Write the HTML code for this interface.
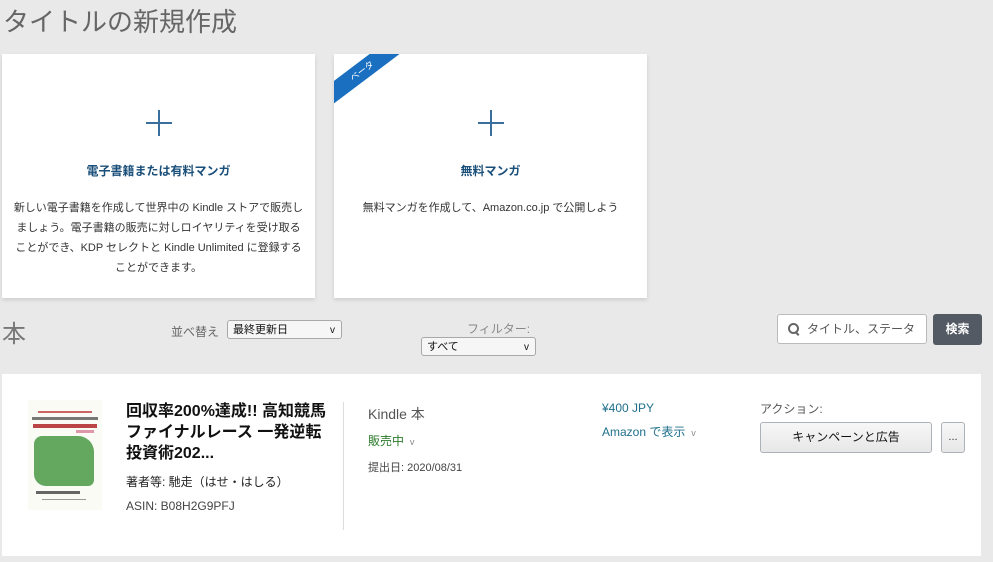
<!DOCTYPE html><html><head><meta charset="utf-8"><style>
body{margin:0;width:993px;height:562px;background:#e9e9e9;font-family:"Liberation Sans","Noto Sans CJK JP",sans-serif;position:relative;overflow:hidden;color:#333}
.a{position:absolute}
.card{position:absolute;top:54px;width:313px;height:244px;background:#fff;box-shadow:0 2px 4px rgba(0,0,0,.12)}
.plus{position:absolute;top:56px;width:26px;height:26px}
.plus:before{content:"";position:absolute;left:12px;top:0;width:2px;height:26px;background:#3a6e9c}
.plus:after{content:"";position:absolute;top:12px;left:0;height:2px;width:26px;background:#3a6e9c}
.ct{position:absolute;top:108px;width:100%;text-align:center;color:#1a4f7a;font-weight:bold;font-size:12px}
.cd{position:absolute;top:144px;left:10px;right:10px;text-align:center;font-size:11px;line-height:20px;color:#333}
.sel{position:absolute;height:19px;background:#f6f6f6;border:1px solid #a8a8a8;border-radius:3px;font-size:11px;line-height:19px;padding-left:5px;box-sizing:border-box;color:#111}
.sel span{position:absolute;right:6px;top:0;font-size:10px}
</style></head><body>
<div class="a" style="left:3px;top:2px;font-size:26px;color:#666">タイトルの新規作成</div>
<div class="card" style="left:2px"><div class="plus" style="left:144px"></div><div class="ct">電子書籍または有料マンガ</div><div class="cd">新しい電子書籍を作成して世界中の Kindle ストアで販売しましょう。電子書籍の販売に対しロイヤリティを受け取ることができ、KDP セレクトと Kindle Unlimited に登録することができます。</div></div>
<div class="card" style="left:334px;overflow:hidden"><div class="a" style="left:-22px;top:8px;width:100px;height:18px;background:#1a6fc0;transform:rotate(-37deg);color:#fff;font-size:9px;text-align:center;line-height:18px">ベータ</div><div class="plus" style="left:144px"></div><div class="ct">無料マンガ</div><div class="cd" style="top:144px">無料マンガを作成して、Amazon.co.jp で公開しよう</div></div>
<div class="a" style="left:2px;top:314px;font-size:24px;color:#777">本</div>
<div class="a" style="left:171px;top:323px;font-size:12px;color:#666">並べ替え</div>
<div class="sel" style="left:227px;top:320px;width:115px">最終更新日<span>v</span></div>
<div class="a" style="left:467px;top:320px;font-size:12px;color:#888">フィルター:</div>
<div class="sel" style="left:421px;top:337px;width:115px">すべて<span>v</span></div>
<div class="a" style="left:777px;top:314px;width:150px;height:30px;background:#fff;border:1px solid #bbb;border-radius:3px;box-sizing:border-box;font-size:12px;line-height:28px;padding-left:29px;color:#555;white-space:nowrap;overflow:hidden"><span style="display:inline-block;width:108px;overflow:hidden;vertical-align:top">タイトル、ステータス</span></div>
<div class="a" style="left:788px;top:323px;width:7px;height:7px;border:2px solid #666;border-radius:50%"></div>
<div class="a" style="left:796px;top:331px;width:2px;height:5px;background:#666;transform:rotate(-45deg)"></div>
<div class="a" style="left:933px;top:314px;width:49px;height:31px;background:#535a63;border-radius:3px;color:#fff;font-size:12px;font-weight:bold;text-align:center;line-height:31px">検索</div>
<div class="a" style="left:2px;top:374px;width:979px;height:182px;background:#fff"></div>
<div class="a" style="left:28px;top:400px;width:74px;height:110px;background:#fbfbf6">
<div class="a" style="left:10px;top:11px;width:54px;height:2px;background:#c66"></div>
<div class="a" style="left:4px;top:17px;width:66px;height:3px;background:#777"></div>
<div class="a" style="left:5px;top:24px;width:64px;height:4px;background:#b44"></div>
<div class="a" style="left:48px;top:30px;width:18px;height:3px;background:#d9a"></div>
<div class="a" style="left:6px;top:36px;width:60px;height:50px;background:#63a85e;border-radius:8px 16px 6px 12px"></div>
<div class="a" style="left:8px;top:91px;width:44px;height:3px;background:#666"></div>
<div class="a" style="left:14px;top:99px;width:44px;height:1px;background:#999"></div></div>
<div class="a" style="left:126px;top:401px;font-size:16px;font-weight:bold;line-height:21px;color:#111;width:230px;white-space:nowrap">回収率200%達成!! 高知競馬<br>ファイナルレース 一発逆転<br>投資術202...</div>
<div class="a" style="left:126px;top:473px;font-size:12px;color:#222">著者等: 馳走（はせ・はしる）</div>
<div class="a" style="left:126px;top:499px;font-size:12px;color:#444">ASIN: B08H2G9PFJ</div>
<div class="a" style="left:343px;top:402px;width:1px;height:128px;background:#ddd"></div>
<div class="a" style="left:368px;top:404px;font-size:14px;color:#555">Kindle 本</div>
<div class="a" style="left:368px;top:432px;font-size:12px;color:#2a7a2a">販売中 <span style="color:#888;font-size:9px">&nbsp;v</span></div>
<div class="a" style="left:368px;top:459px;font-size:11px;color:#444">提出日: 2020/08/31</div>
<div class="a" style="left:602px;top:401px;font-size:12px;color:#1f6f8b">¥400 JPY</div>
<div class="a" style="left:602px;top:423px;font-size:12px;color:#1f6f8b">Amazon で表示 <span style="color:#888;font-size:9px">&nbsp;v</span></div>
<div class="a" style="left:760px;top:400px;font-size:12px;color:#555">アクション:</div>
<div class="a" style="left:760px;top:422px;width:172px;height:31px;background:linear-gradient(#f7f7f7,#e7e7e7);border:1px solid #adb1b8;border-radius:3px;box-sizing:border-box;text-align:center;line-height:29px;font-size:12px;color:#111">キャンペーンと広告</div>
<div class="a" style="left:941px;top:422px;width:24px;height:31px;background:linear-gradient(#f7f7f7,#e7e7e7);border:1px solid #adb1b8;border-radius:3px;box-sizing:border-box;text-align:center;line-height:29px;font-size:11px">...</div>
</body></html>
